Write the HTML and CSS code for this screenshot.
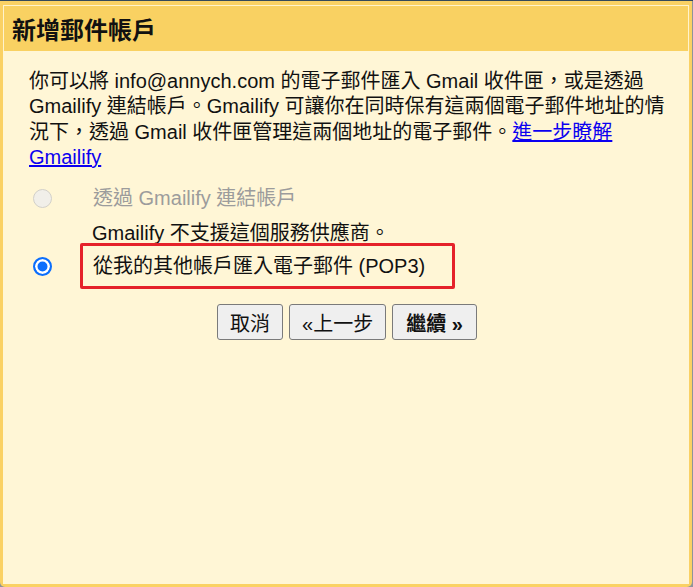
FILE: index.html
```html
<!DOCTYPE html>
<html lang="zh-Hant">
<head>
<meta charset="utf-8">
<title>新增郵件帳戶</title>
<link rel="stylesheet" href="styles.css">
</head>
<body>
<div class="dialog">
  <div class="header"><h1 class="title">新增郵件帳戶</h1></div>
  <div class="content">
    <p class="intro">你可以將 info@annych.com 的電子郵件匯入 Gmail 收件匣，或是透過<br>Gmailify 連結帳戶。Gmailify 可讓你在同時保有這兩個電子郵件地址的情<br>況下，透過 Gmail 收件匣管理這兩個地址的電子郵件。<a class="link" href="#">進一步瞭解<br>Gmailify</a></p>
    <div class="options">
      <label class="option disabled">
        <input class="radio" type="radio" name="mode" disabled>
        <span class="option-text">透過 Gmailify 連結帳戶</span>
      </label>
      <div class="note">Gmailify 不支援這個服務供應商。</div>
      <label class="option selected">
        <input class="radio" type="radio" name="mode" checked>
        <span class="option-text">從我的其他帳戶匯入電子郵件 (POP3)</span>
        <span class="highlight"></span>
      </label>
    </div>
    <div class="buttons">
      <button class="btn" type="button">取消</button>
      <button class="btn" type="button"><span class="arrow">«</span>上一步</button>
      <button class="btn btn-primary" type="button">繼續 <span class="arrow">»</span></button>
    </div>
  </div>
</div>
</body>
</html>
```

FILE: styles.css
```css
html, body {
  margin: 0;
  padding: 0;
}
body {
  background: #8e9499;
  border-top: 1px solid #34495c;
  height: 586px;
  overflow: hidden;
  font-family: "Liberation Sans", "Noto Sans CJK TC", sans-serif;
  color: #111;
}
.dialog {
  width: 686px;
  height: 579px;
  background: #fad164;
  padding: 4px 3px 3px 3px;
  border-radius: 0 0 5px 5px;
  display: flex;
  flex-direction: column;
}
.header {
  height: 45px;
  border: 1px solid #fff3cc;
  border-bottom: none;
  background: #f9d162;
  display: flex;
  align-items: center;
  padding-left: 8px;
}
.title {
  margin: 0;
  font-family: "Noto Sans CJK TC", sans-serif;
  font-size: 24px;
  font-weight: 700;
  line-height: 1;
  color: #111;
  padding-top: 1px;
}
.content {
  flex: 1;
  background: #fff6d6;
  padding: 18px 10px 0 26px;
}
.intro {
  margin: 0;
  font-size: 20px;
  line-height: 25.33px;
  white-space: nowrap;
}
.link {
  color: #0b00f0;
  text-decoration: underline;
}
.options {
  margin-top: 15px;
}
.option {
  position: relative;
  display: flex;
  align-items: center;
  height: 26px;
  font-size: 20px;
  line-height: 26px;
}
.option-text {
  margin-left: 41px;
}
.disabled .option-text {
  color: #9c9c9c;
}
.radio {
  appearance: none;
  -webkit-appearance: none;
  margin: 0 0 0 4px;
  width: 19px;
  height: 19px;
  border-radius: 50%;
  box-sizing: border-box;
}
.disabled .radio {
  background: #f1efe9;
  border: 1.5px solid #d2d0ca;
}
.selected .radio {
  background: #0b6efd;
  border: 2px solid #0b6efd;
  box-shadow: inset 0 0 0 2.5px #ffffff;
}
.note {
  margin: 9px 0 0 63px;
  font-size: 20px;
  line-height: 26px;
}
.selected {
  margin-top: 7px;
}
.highlight {
  position: absolute;
  left: 51px;
  top: -10px;
  width: 369px;
  height: 40px;
  border: 3px solid #e5222a;
  border-radius: 2px;
}
.buttons {
  margin-top: 25px;
  display: flex;
  justify-content: center;
  gap: 6px;
  padding-right: 14px;
}
.btn {
  height: 36px;
  padding: 0 12px;
  background: #efefef;
  border: 1px solid #7a7a7a;
  border-radius: 3px;
  font-family: "Liberation Sans", "Noto Sans CJK TC", sans-serif;
  font-size: 20px;
  color: #111;
}
.btn-primary {
  font-weight: 700;
  padding: 0 13px;
}
.arrow {
  font-size: 20px;
}
```
